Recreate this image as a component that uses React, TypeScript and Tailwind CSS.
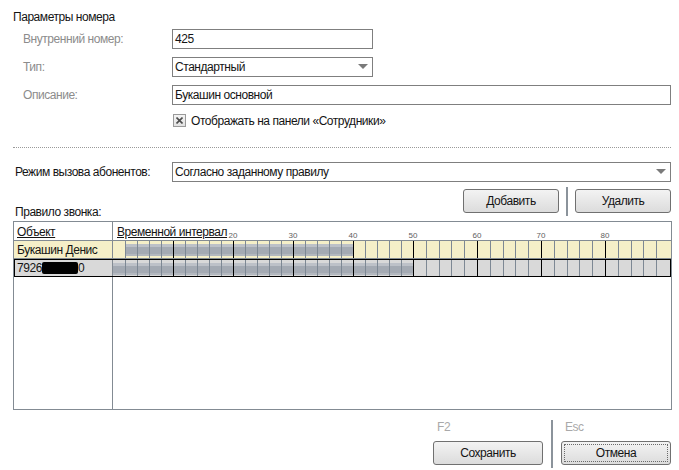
import React from "react";

const B: number[] = [];
for (let i = 0; i <= 45; i++) B.push(i <= 25 ? 12 * i : 300 + Math.round(12.8 * (i - 25)));
B[45] = 556;

function Cells({ from, to }: { from: number; to: number }) {
  return (
    <div className="flex h-full">
      {B.slice(0, -1).map((x, i) => {
        const w = B[i + 1] - x;
        const cls =
          i === 0
            ? "relative h-full"
            : i % 5 === 0
            ? "relative h-full border-l border-black"
            : "relative h-full border-l border-[#7d8894]";
        return (
          <div key={i} className={cls} style={{ width: w }}>
            {i >= from && i < to && (
              <div className="absolute left-0 right-0 top-[3px] h-[12px] bg-[#a4aab3] border-t-[3px] border-b-[2px] border-t-[#bdc1c8] border-b-[#b3b8bf]" />
            )}
          </div>
        );
      })}
    </div>
  );
}

function Arrow() {
  return (
    <svg width="10" height="6" viewBox="0 0 10 6">
      <path d="M0 0 L10 0 L5 5 Z" fill="#7a7a7a" />
    </svg>
  );
}

function Btn({ children, focus }: { children: React.ReactNode; focus?: boolean }) {
  return (
    <div className="h-[24px] border border-[#707070] rounded-[3px] bg-gradient-to-b from-[#f3f3f3] to-[#dcdcdc] flex items-center justify-center relative">
      {focus && <div className="absolute inset-[2px] border border-dotted border-[#6a6a6a]" />}
      <span className="relative">{children}</span>
    </div>
  );
}

export default function App() {
  return (
    <div className="w-[679px] h-[470px] bg-white text-[12px] leading-[14px] tracking-[-0.45px] text-[#141414] font-['Liberation_Sans',Arial,sans-serif] overflow-hidden">
      <div className="pl-[13px] pt-[10px]">
        <div className="h-[14px]">Параметры номера</div>

        <div className="mt-[5px] flex flex-col gap-[8px]">
          <div className="flex items-center h-[20px]">
            <div className="w-[159px] pl-[10px] text-[#8c8c8c]">Внутренний номер:</div>
            <div className="w-[201px] h-[20px] border border-[#7f7f7f] flex items-center px-[2px]">425</div>
          </div>
          <div className="flex items-center h-[20px]">
            <div className="w-[159px] pl-[10px] text-[#8c8c8c]">Тип:</div>
            <div className="w-[201px] h-[20px] border border-[#7f7f7f] flex items-center justify-between pl-[2px] pr-[4px]">
              <span>Стандартный</span>
              <Arrow />
            </div>
          </div>
          <div className="flex items-center h-[20px]">
            <div className="w-[159px] pl-[10px] text-[#8c8c8c]">Описание:</div>
            <div className="w-[499px] h-[20px] border border-[#7f7f7f] flex items-center px-[2px]">Букашин основной</div>
          </div>
        </div>

        <div className="mt-[9px] h-[13px] flex items-center pl-[160px]">
          <div className="w-[13px] h-[13px] border border-[#9a9a9a] bg-gradient-to-b from-[#f4f4f4] to-[#e2e2e2] flex items-center justify-center">
            <svg width="7" height="7" viewBox="0 0 7 7">
              <path d="M0.5 0.5 L6.5 6.5 M6.5 0.5 L0.5 6.5" stroke="#4d4d4d" strokeWidth="1.6" />
            </svg>
          </div>
          <span className="ml-[5px]">Отображать на панели «Сотрудники»</span>
        </div>

        <div className="mt-[20px] w-[658px] border-t border-dotted border-[#9a9a9a]" />

        <div className="mt-[14px] flex items-center h-[20px]">
          <div className="w-[159px] pl-[2px]">Режим вызова абонентов:</div>
          <div className="w-[499px] h-[20px] border border-[#7f7f7f] flex items-center justify-between pl-[2px] pr-[4px]">
            <span>Согласно заданному правилу</span>
            <Arrow />
          </div>
        </div>

        <div className="h-[39px] w-[658px] flex justify-between">
          <div className="self-end mb-[2px] pl-[2px]">Правило звонка:</div>
          <div className="mt-[4px] h-[30px] flex items-center gap-[7px]">
            <div className="w-[96px]"><Btn>Добавить</Btn></div>
            <div className="w-[2px] h-[29px] bg-[#8b939b]" />
            <div className="w-[96px]"><Btn>Удалить</Btn></div>
          </div>
        </div>

        <div className="w-[659px] h-[189px] border border-[#838b93] flex flex-col">
          <div className="h-[19px] flex border-b border-[#838b93] shrink-0">
            <div className="w-[99px] border-r border-[#838b93] pl-[3px] pt-[3px] underline">Объект</div>
            <div className="flex-1 relative pl-[4px] pt-[3px]">
              <span className="underline">Временной интервал</span>
              {[10, 15, 20, 25, 30, 35, 40].map((i) => (
                <span
                  key={i}
                  className="absolute top-[9px] text-[8px] leading-[9px] tracking-normal text-[#606060] -translate-x-1/2"
                  style={{ left: B[i] }}
                >
                  {i * 2}
                </span>
              ))}
            </div>
          </div>
          <div className="h-[18px] flex border-b border-[#838b93] bg-[#f5efc8] shrink-0">
            <div className="w-[99px] border-r border-[#838b93] pl-[3px] flex items-center">Букашин Денис</div>
            <div className="flex-1 overflow-hidden">
              <Cells from={1} to={20} />
            </div>
          </div>
          <div className="h-[18px] flex border border-black bg-[#d9d9d9] shrink-0">
            <div className="w-[98px] border-r border-[#838b93] pl-[2px] flex items-center">
              7926<span className="inline-block w-[36px] h-[12px] bg-black rounded-[2px]" />0
            </div>
            <div className="flex-1 overflow-hidden">
              <Cells from={0} to={25} />
            </div>
          </div>
          <div className="flex-1 flex">
            <div className="w-[99px] border-r border-[#838b93]" />
          </div>
        </div>

        <div className="mt-[10px] w-[658px] flex justify-end">
          <div className="flex gap-[8px]">
            <div className="w-[110px] flex flex-col">
              <div className="h-[14px] pl-[4px] text-[#a9a9a9]">F2</div>
              <div className="mt-[7px]"><Btn>Сохранить</Btn></div>
            </div>
            <div className="w-[2px] h-[48px] bg-[#8b939b]" />
            <div className="w-[110px] flex flex-col">
              <div className="h-[14px] pl-[4px] text-[#a9a9a9]">Esc</div>
              <div className="mt-[7px]"><Btn focus>Отмена</Btn></div>
            </div>
          </div>
        </div>
      </div>
    </div>
  );
}
